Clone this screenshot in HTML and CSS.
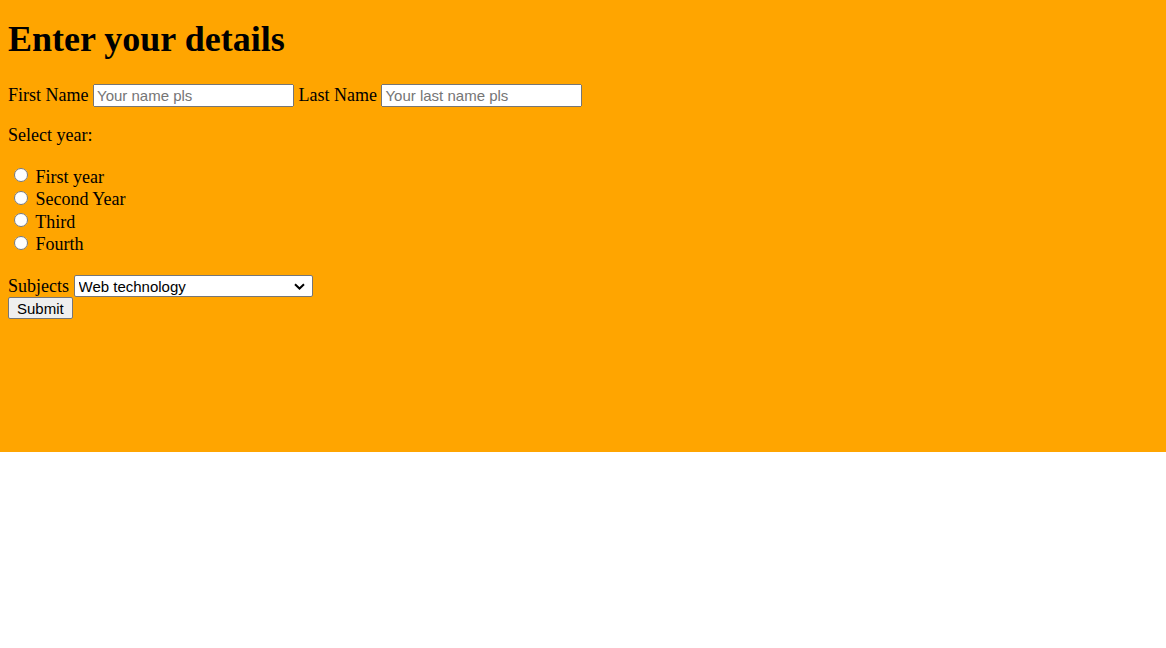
FILE: index.html
```html
<!DOCTYPE html>
<html>
<head>
<meta charset="utf-8">
<title>Enter your details</title>
<link rel="stylesheet" href="styles.css">
</head>
<body>
<form class="page">
<h1>Enter your details</h1>
<p>First Name <input type="text" class="field" placeholder="Your name pls"> Last Name <input type="text" class="field" placeholder="Your last name pls"></p>
<p class="year-label">Select year:</p>
<input type="radio" name="year" class="radio"> First year<br>
<input type="radio" name="year" class="radio"> Second Year<br>
<input type="radio" name="year" class="radio"> Third<br>
<input type="radio" name="year" class="radio"> Fourth<br>
<p class="subjects">Subjects <span class="select-wrap"><select class="select"><option>Web technology</option><option>Data structures</option><option>Operating systems</option></select><svg class="chevron" width="11" height="7" viewBox="0 0 11 7" aria-hidden="true"><path d="M1 1.2 L5.5 5.5 L10 1.2" fill="none" stroke="#000" stroke-width="2"/></svg></span><br><button type="submit" class="btn">Submit</button></p>
</form>
</body>
</html>
```
FILE: styles.css
```css
html { background: #fff; }
body {
  margin: 0;
  font-family: "Liberation Serif", "Times New Roman", serif;
  font-size: 18px;
  color: #000;
}
.page {
  display: flow-root;
  box-sizing: border-box;
  height: 452px;
  padding: 0 8px;
  background: orange;
}
h1 {
  font-size: 36px;
  font-weight: bold;
  margin: 18px 0 24px;
}
p { margin: 18px 0; }
.year-label { margin-bottom: 18.5px; }
.field, .select, .btn {
  font-family: "Liberation Sans", Arial, sans-serif;
  font-size: 15px;
}
.field {
  width: 201px;
  height: 23px;
  box-sizing: border-box;
  padding: 1px 2px;
}
.radio {
  width: 14px;
  height: 14px;
  margin: 3.5px 3px 0 6px;
}
.select-wrap {
  position: relative;
  display: inline-block;
}
.select {
  -webkit-appearance: none;
  appearance: none;
  width: 239px;
  height: 22px;
  box-sizing: border-box;
  padding: 0 20px 0 4px;
  border: 1px solid #767676;
  border-radius: 2px;
  background: #fff;
  color: #000;
}
.chevron {
  position: absolute;
  right: 8px;
  top: 8px;
  pointer-events: none;
}
.btn {
  height: 22px;
  padding: 1px 8px;
  box-sizing: border-box;
  border: 1px solid #767676;
  border-radius: 2px;
  background: #efefef;
  color: #000;
}
.subjects { margin-top: 20.5px; }
```
